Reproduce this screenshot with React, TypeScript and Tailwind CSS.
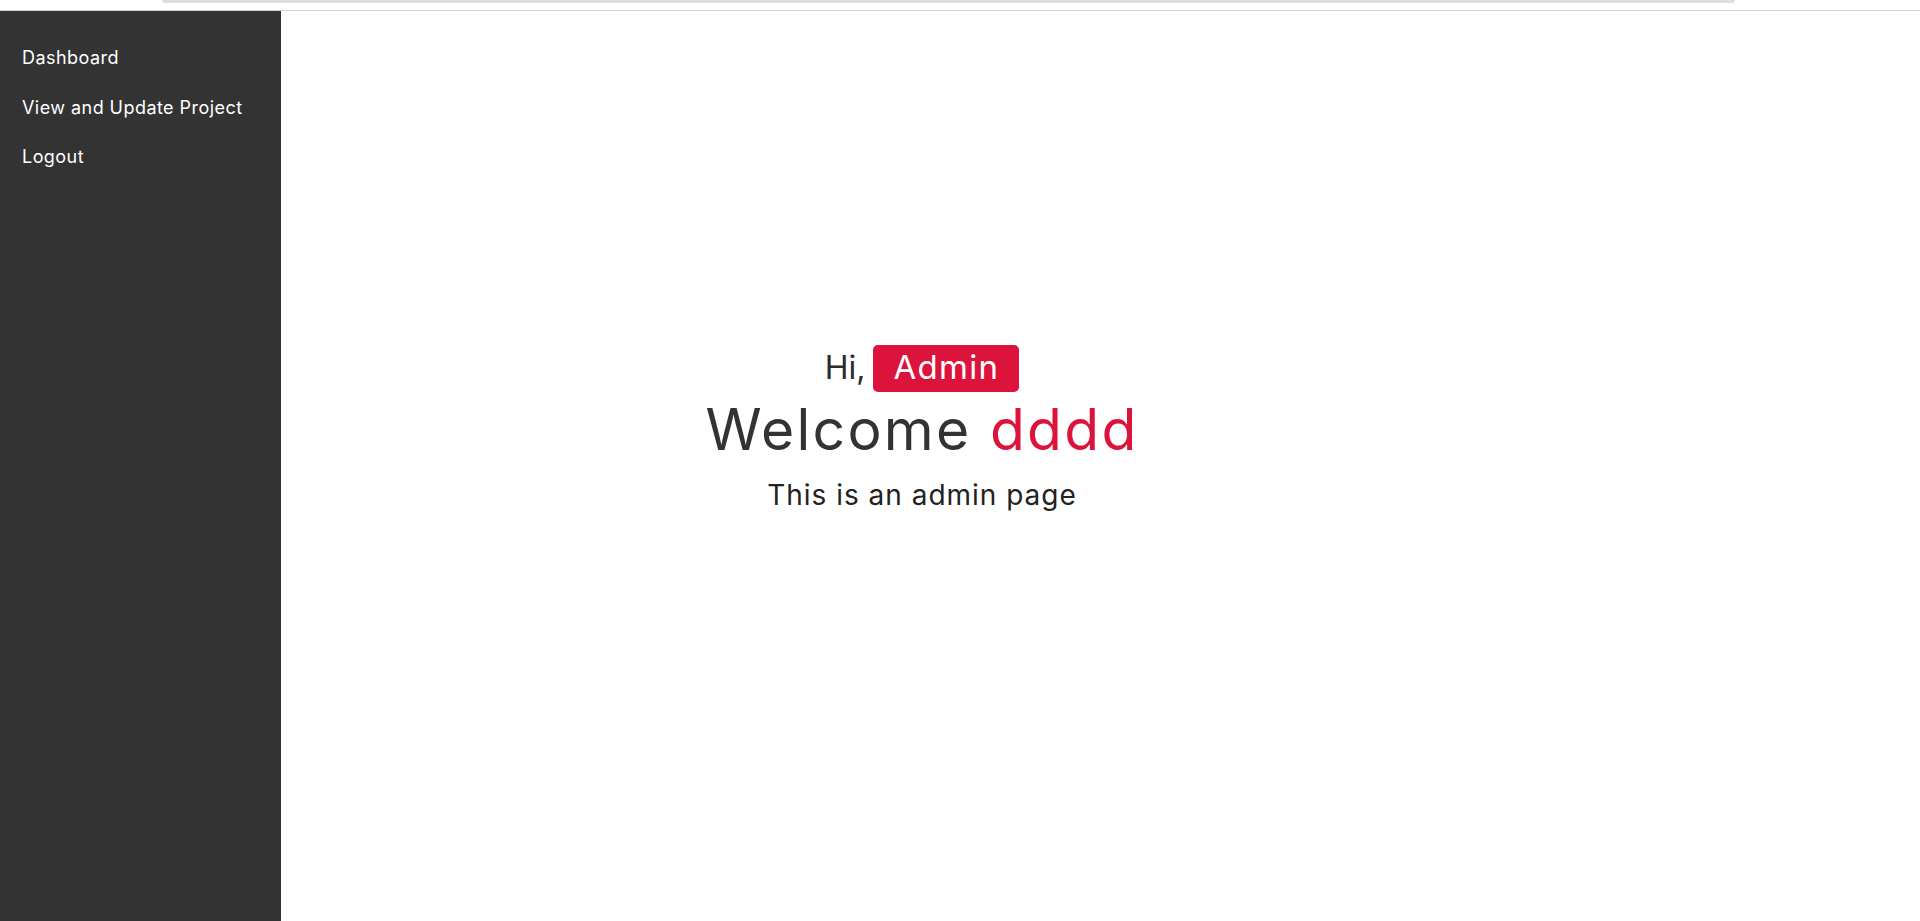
import React from 'react';

const links = ['Dashboard', 'View and Update Project', 'Logout'];

const App: React.FC = () => {
    return (
        <div className="w-[1920px] h-[921px] overflow-hidden bg-white flex flex-col" style={{ fontFamily: 'Inter, "Open Sans", sans-serif' }}>
            {/* top strip */}
            <div className="h-[11px] border-b border-[#d4d4d4] relative shrink-0">
                <div className="absolute left-[162px] top-0 w-[1573px] h-[3px] bg-[#dedede] rounded-b-full" />
            </div>
            <div className="flex flex-1">
                <aside className="w-[281px] bg-[#333333] shrink-0 pt-[35px]">
                    <ul className="flex flex-col">
                        {links.map((l) => (
                            <li key={l} className="h-[49.5px] px-[22px] text-white text-[18px] leading-[24px] tracking-[0.025em]">
                                <a href="#">{l}</a>
                            </li>
                        ))}
                    </ul>
                </aside>
                <main className="flex-1">
                    <div className="w-[1282px] flex flex-col items-center pt-[333px] text-[#333333]">
                        <div className="flex items-center gap-[8px] h-[48px]">
                            <span className="text-[32px] text-[#2b2b2b]">Hi,</span>
                            <span className="bg-[#dc143c] text-white text-[33px] tracking-[0.04em] rounded-[5px] h-[47px] px-[20px] flex items-center">Admin</span>
                        </div>
                        <h1 className="text-[57px] leading-[80px] mt-[-2px] tracking-[0.04em]">
                            Welcome <span className="text-[#dc143c]">dddd</span>
                        </h1>
                        <p className="text-[28px] text-[#222] mt-[4px] tracking-[0.035em]">This is an admin page</p>
                    </div>
                </main>
            </div>
        </div>
    );
};

export default App;
